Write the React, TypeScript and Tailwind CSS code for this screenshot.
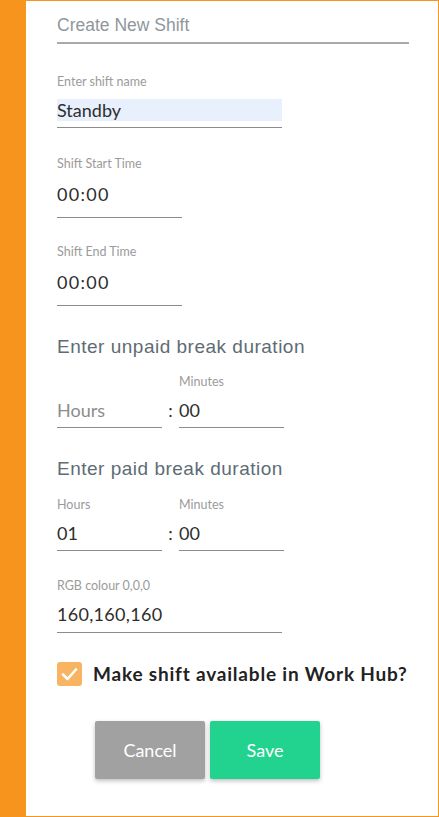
const FONT = "font-['Lato','Noto_Sans',sans-serif]";
const ARIAL = "font-['Liberation_Sans',Arial,sans-serif]";

function Label({ children, className = "" }: { children?: React.ReactNode; className?: string }) {
  return (
    <div className={`h-[16px] text-[12.5px] leading-[16px] text-[#9b9b9b] ${className}`}>{children}</div>
  );
}

function Value({ children, muted = false, className = "" }: { children: React.ReactNode; muted?: boolean; className?: string }) {
  return (
    <div className={`h-[22px] text-[18px] leading-[22px] ${muted ? "text-[#8c8c8c]" : "text-[#2e2e2e]"} ${className}`}>
      {children}
    </div>
  );
}

function BreakRow({ hours, minutes, hoursLabel }: { hours: string; minutes: string; hoursLabel: boolean }) {
  return (
    <div className="grid grid-cols-[105px_17px_105px]">
      <Label>{hoursLabel ? "Hours" : ""}</Label>
      <div />
      <Label>Minutes</Label>
      <div className="mt-[9px] border-b border-[#8c8c8c] pb-[6px]">
        <Value muted={!hoursLabel}>{hours}</Value>
      </div>
      <div className="mt-[9px] text-center text-[18px] leading-[22px] text-[#2e2e2e]">:</div>
      <div className="mt-[9px] border-b border-[#8c8c8c] pb-[6px]">
        <Value>{minutes}</Value>
      </div>
    </div>
  );
}

export default function App() {
  return (
    <div className={`flex h-[817px] w-[439px] border border-[#f7941d] bg-white ${FONT}`}>
      <div className="w-[25px] shrink-0 bg-[#f7941d]" />
      <div className="flex-1 pl-[31px] pr-[29px] pt-[12px]">
        <div className="border-b-2 border-[#a5aaad] pb-[5px]">
          <h1 className={`h-[24px] text-[17.5px] leading-[24px] text-[#90979b] ${ARIAL}`}>Create New Shift</h1>
        </div>

        <Label className="mt-[30px]">Enter shift name</Label>
        <div className="mt-[9px] w-[225px] border-b border-[#8c8c8c] pb-[6px]">
          <div className="bg-[#e8f0fe]">
            <Value>Standby</Value>
          </div>
        </div>

        <Label className="mt-[28px]">Shift Start Time</Label>
        <div className="mt-[11px] w-[125px] border-b border-[#8c8c8c] pb-[12px]">
          <Value className="tracking-[1.3px]">00:00</Value>
        </div>

        <Label className="mt-[26px]">Shift End Time</Label>
        <div className="mt-[11px] w-[125px] border-b border-[#8c8c8c] pb-[12px]">
          <Value className="tracking-[1.3px]">00:00</Value>
        </div>

        <h2 className={`mt-[29px] h-[24px] text-[19px] leading-[24px] tracking-[0.5px] text-[#5e6c74] ${ARIAL}`}>
          Enter unpaid break duration
        </h2>
        <div className="mt-[15px]">
          <BreakRow hours="Hours" minutes="00" hoursLabel={false} />
        </div>

        <h2 className={`mt-[29px] h-[24px] text-[19px] leading-[24px] tracking-[0.5px] text-[#5e6c74] ${ARIAL}`}>
          Enter paid break duration
        </h2>
        <div className="mt-[16px]">
          <BreakRow hours="01" minutes="00" hoursLabel={true} />
        </div>

        <Label className="mt-[27px]">RGB colour 0,0,0</Label>
        <div className="mt-[9px] w-[225px] border-b border-[#8c8c8c] pb-[7px]">
          <Value className="tracking-[0.3px]">160,160,160</Value>
        </div>

        <div className="mt-[29px] flex items-center gap-[11px]">
          <div className="flex h-[24px] w-[25px] items-center justify-center rounded-[3px] bg-[#f8b462]">
            <svg width="25" height="24" viewBox="0 0 25 24" fill="none">
              <path d="M6 12.5 L10.5 17 L19 7.5" stroke="white" strokeWidth="2.6" strokeLinecap="round" strokeLinejoin="round" />
            </svg>
          </div>
          <span className="text-[19px] font-bold leading-[24px] tracking-[0.8px] text-[#222]">
            Make shift available in Work Hub?
          </span>
        </div>

        <div className="mt-[35px] flex gap-[5px] pl-[38px]">
          <button className="h-[58px] w-[110px] rounded-[2px] bg-[#a1a1a1] text-[18px] text-white shadow-[0_2px_4px_rgba(0,0,0,0.25)]">
            Cancel
          </button>
          <button className="h-[58px] w-[110px] rounded-[2px] bg-[#22d38f] text-[18px] text-white shadow-[0_2px_4px_rgba(0,0,0,0.25)]">
            Save
          </button>
        </div>
      </div>
    </div>
  );
}
